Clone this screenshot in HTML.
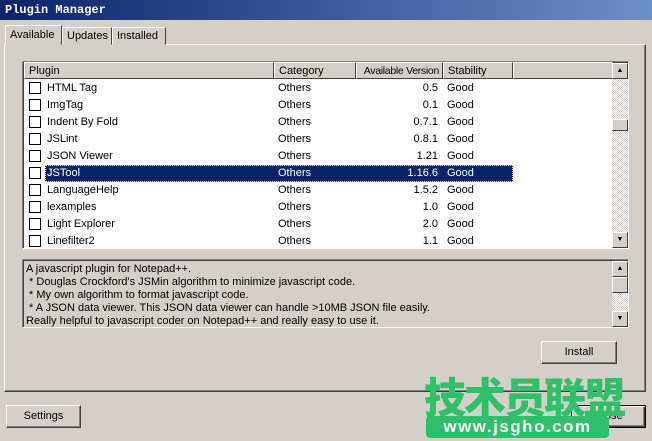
<!DOCTYPE html>
<html><head><style>
*{margin:0;padding:0;box-sizing:border-box}
body{width:652px;height:441px;background:#d4d0c8;font-family:"Liberation Sans",sans-serif;font-size:11px;position:relative;overflow:hidden;color:#000}
.a{position:absolute}
.title{left:0;top:0;width:652px;height:20px;background:linear-gradient(90deg,#0a246a,#6d8fc8);color:#fff;font-weight:bold;font-family:"Liberation Mono",monospace;font-size:12px;line-height:20px;padding-left:5px}
.raised{border:1px solid;border-color:#fff #404040 #404040 #fff;box-shadow:inset -1px -1px #808080}
.sunk{border:1px solid;border-color:#808080 #fff #fff #808080;box-shadow:inset 1px 1px #404040}
.tab{top:27px;height:18px;border:1px solid;border-color:#fff #404040 #d4d0c8 #fff;line-height:16px;padding:0 4px;font-size:11px;white-space:nowrap}
.btn{text-align:center;line-height:20px;font-size:11px}
.row{position:absolute;left:0;height:17px;line-height:17px;width:588px;white-space:nowrap}
.row span{position:absolute}
.cb{position:absolute;left:6px;top:2px;width:12px;height:12px;border:1px solid #000;background:#fff}
.hd{position:absolute;top:0;height:17px;line-height:16px;border:1px solid;border-color:#fff #404040 #404040 #fff;padding-left:4px;background:#d4d0c8;white-space:nowrap;overflow:hidden}
.sb{background:repeating-conic-gradient(#d4d0c8 0 25%,#fff 0 50%) 0 0/2px 2px}
.arr{position:absolute;left:0;width:16px;height:16px;background:#d4d0c8;border:1px solid;border-color:#fff #404040 #404040 #fff;font-size:7px;text-align:center;line-height:14px}
</style></head><body>
<div class="a title">Plugin Manager</div>
<div class="a" style="left:4px;top:44px;width:642px;height:348px;border:1px solid;border-color:#fff #404040 #404040 #fff;box-shadow:inset -1px -1px #808080"></div>
<div class="a tab" style="left:5px;top:25px;height:20px;background:#d4d0c8;width:57px;line-height:18px">Available</div>
<div class="a tab" style="left:62px;width:50px">Updates</div>
<div class="a tab" style="left:112px;width:54px">Installed</div>

<div class="a sunk" style="left:22px;top:61px;width:607px;height:188px;background:#fff;overflow:hidden">
 <div class="hd" style="left:1px;width:250px">Plugin</div>
 <div class="hd" style="left:251px;width:82px">Category</div>
 <div class="hd" style="left:333px;width:87px;text-align:right;padding:0 3px 0 0;font-size:10.5px;letter-spacing:-0.3px">Available Version</div>
 <div class="hd" style="left:420px;width:70px">Stability</div>
 <div class="hd" style="left:490px;width:100px"></div>
 <div style="position:absolute;left:0;top:18px">
  <div class="row" style="top:0"><div class="cb"></div><span style="left:24px">HTML Tag</span><span style="left:255px">Others</span><span style="right:173px">0.5</span><span style="left:424px">Good</span></div>
  <div class="row" style="top:17px"><div class="cb"></div><span style="left:24px">ImgTag</span><span style="left:255px">Others</span><span style="right:173px">0.1</span><span style="left:424px">Good</span></div>
  <div class="row" style="top:34px"><div class="cb"></div><span style="left:24px">Indent By Fold</span><span style="left:255px">Others</span><span style="right:173px">0.7.1</span><span style="left:424px">Good</span></div>
  <div class="row" style="top:51px"><div class="cb"></div><span style="left:24px">JSLint</span><span style="left:255px">Others</span><span style="right:173px">0.8.1</span><span style="left:424px">Good</span></div>
  <div class="row" style="top:68px"><div class="cb"></div><span style="left:24px">JSON Viewer</span><span style="left:255px">Others</span><span style="right:173px">1.21</span><span style="left:424px">Good</span></div>
  <div class="row" style="top:85px"><div class="cb"></div><div style="position:absolute;left:22px;top:0;width:468px;height:17px;background:#0a246a;outline:1px dotted #ff0;outline-offset:-1px"></div><span style="left:24px;color:#fff">JSTool</span><span style="left:255px;color:#fff">Others</span><span style="right:173px;color:#fff">1.16.6</span><span style="left:424px;color:#fff">Good</span></div>
  <div class="row" style="top:102px"><div class="cb"></div><span style="left:24px">LanguageHelp</span><span style="left:255px">Others</span><span style="right:173px">1.5.2</span><span style="left:424px">Good</span></div>
  <div class="row" style="top:119px"><div class="cb"></div><span style="left:24px">lexamples</span><span style="left:255px">Others</span><span style="right:173px">1.0</span><span style="left:424px">Good</span></div>
  <div class="row" style="top:136px"><div class="cb"></div><span style="left:24px">Light Explorer</span><span style="left:255px">Others</span><span style="right:173px">2.0</span><span style="left:424px">Good</span></div>
  <div class="row" style="top:153px"><div class="cb"></div><span style="left:24px">Linefilter2</span><span style="left:255px">Others</span><span style="right:173px">1.1</span><span style="left:424px">Good</span></div>
 </div>
 <div class="sb" style="position:absolute;left:589px;top:1px;width:16px;height:185px">
  <div class="arr" style="top:0">▲</div>
  <div class="arr" style="top:56px;height:12px"></div>
  <div class="arr" style="top:169px">▼</div>
 </div>
</div>

<div class="a sunk" style="left:22px;top:259px;width:607px;height:69px;overflow:hidden;line-height:13px;padding:3px 0 0 3px;white-space:nowrap">
A javascript plugin for Notepad++.<br>&nbsp;* Douglas Crockford's JSMin algorithm to minimize javascript code.<br>&nbsp;* My own algorithm to format javascript code.<br>&nbsp;* A JSON data viewer. This JSON data viewer can handle &gt;10MB JSON file easily.<br>Really helpful to javascript coder on Notepad++ and really easy to use it.
 <div class="sb" style="position:absolute;left:589px;top:1px;width:16px;height:66px">
  <div class="arr" style="top:0">▲</div>
  <div class="arr" style="top:16px"></div>
  <div class="arr" style="top:50px">▼</div>
 </div>
</div>

<div class="a raised btn" style="left:541px;top:341px;width:76px;height:23px">Install</div>
<div class="a raised btn" style="left:6px;top:405px;width:75px;height:23px">Settings</div>
<div class="a btn" style="left:571px;top:405px;width:75px;height:23px;border:1px solid #000;box-shadow:inset 1px 1px #fff,inset -1px -1px #404040,inset -2px -2px #808080">Close</div>

<div class="a" style="left:424px;top:372px;font-family:'Noto Sans CJK SC',sans-serif;font-weight:900;font-size:42px;line-height:48px;color:#2ec16a;letter-spacing:-2px">技术员联盟</div>
<div class="a" style="left:426px;top:416px;width:183px;height:22px;background:#2ec16a;border-radius:4px;color:#fff;font-weight:bold;font-size:17px;line-height:22px;text-align:center;letter-spacing:1.5px">www.jsgho.com</div>
</body></html>
